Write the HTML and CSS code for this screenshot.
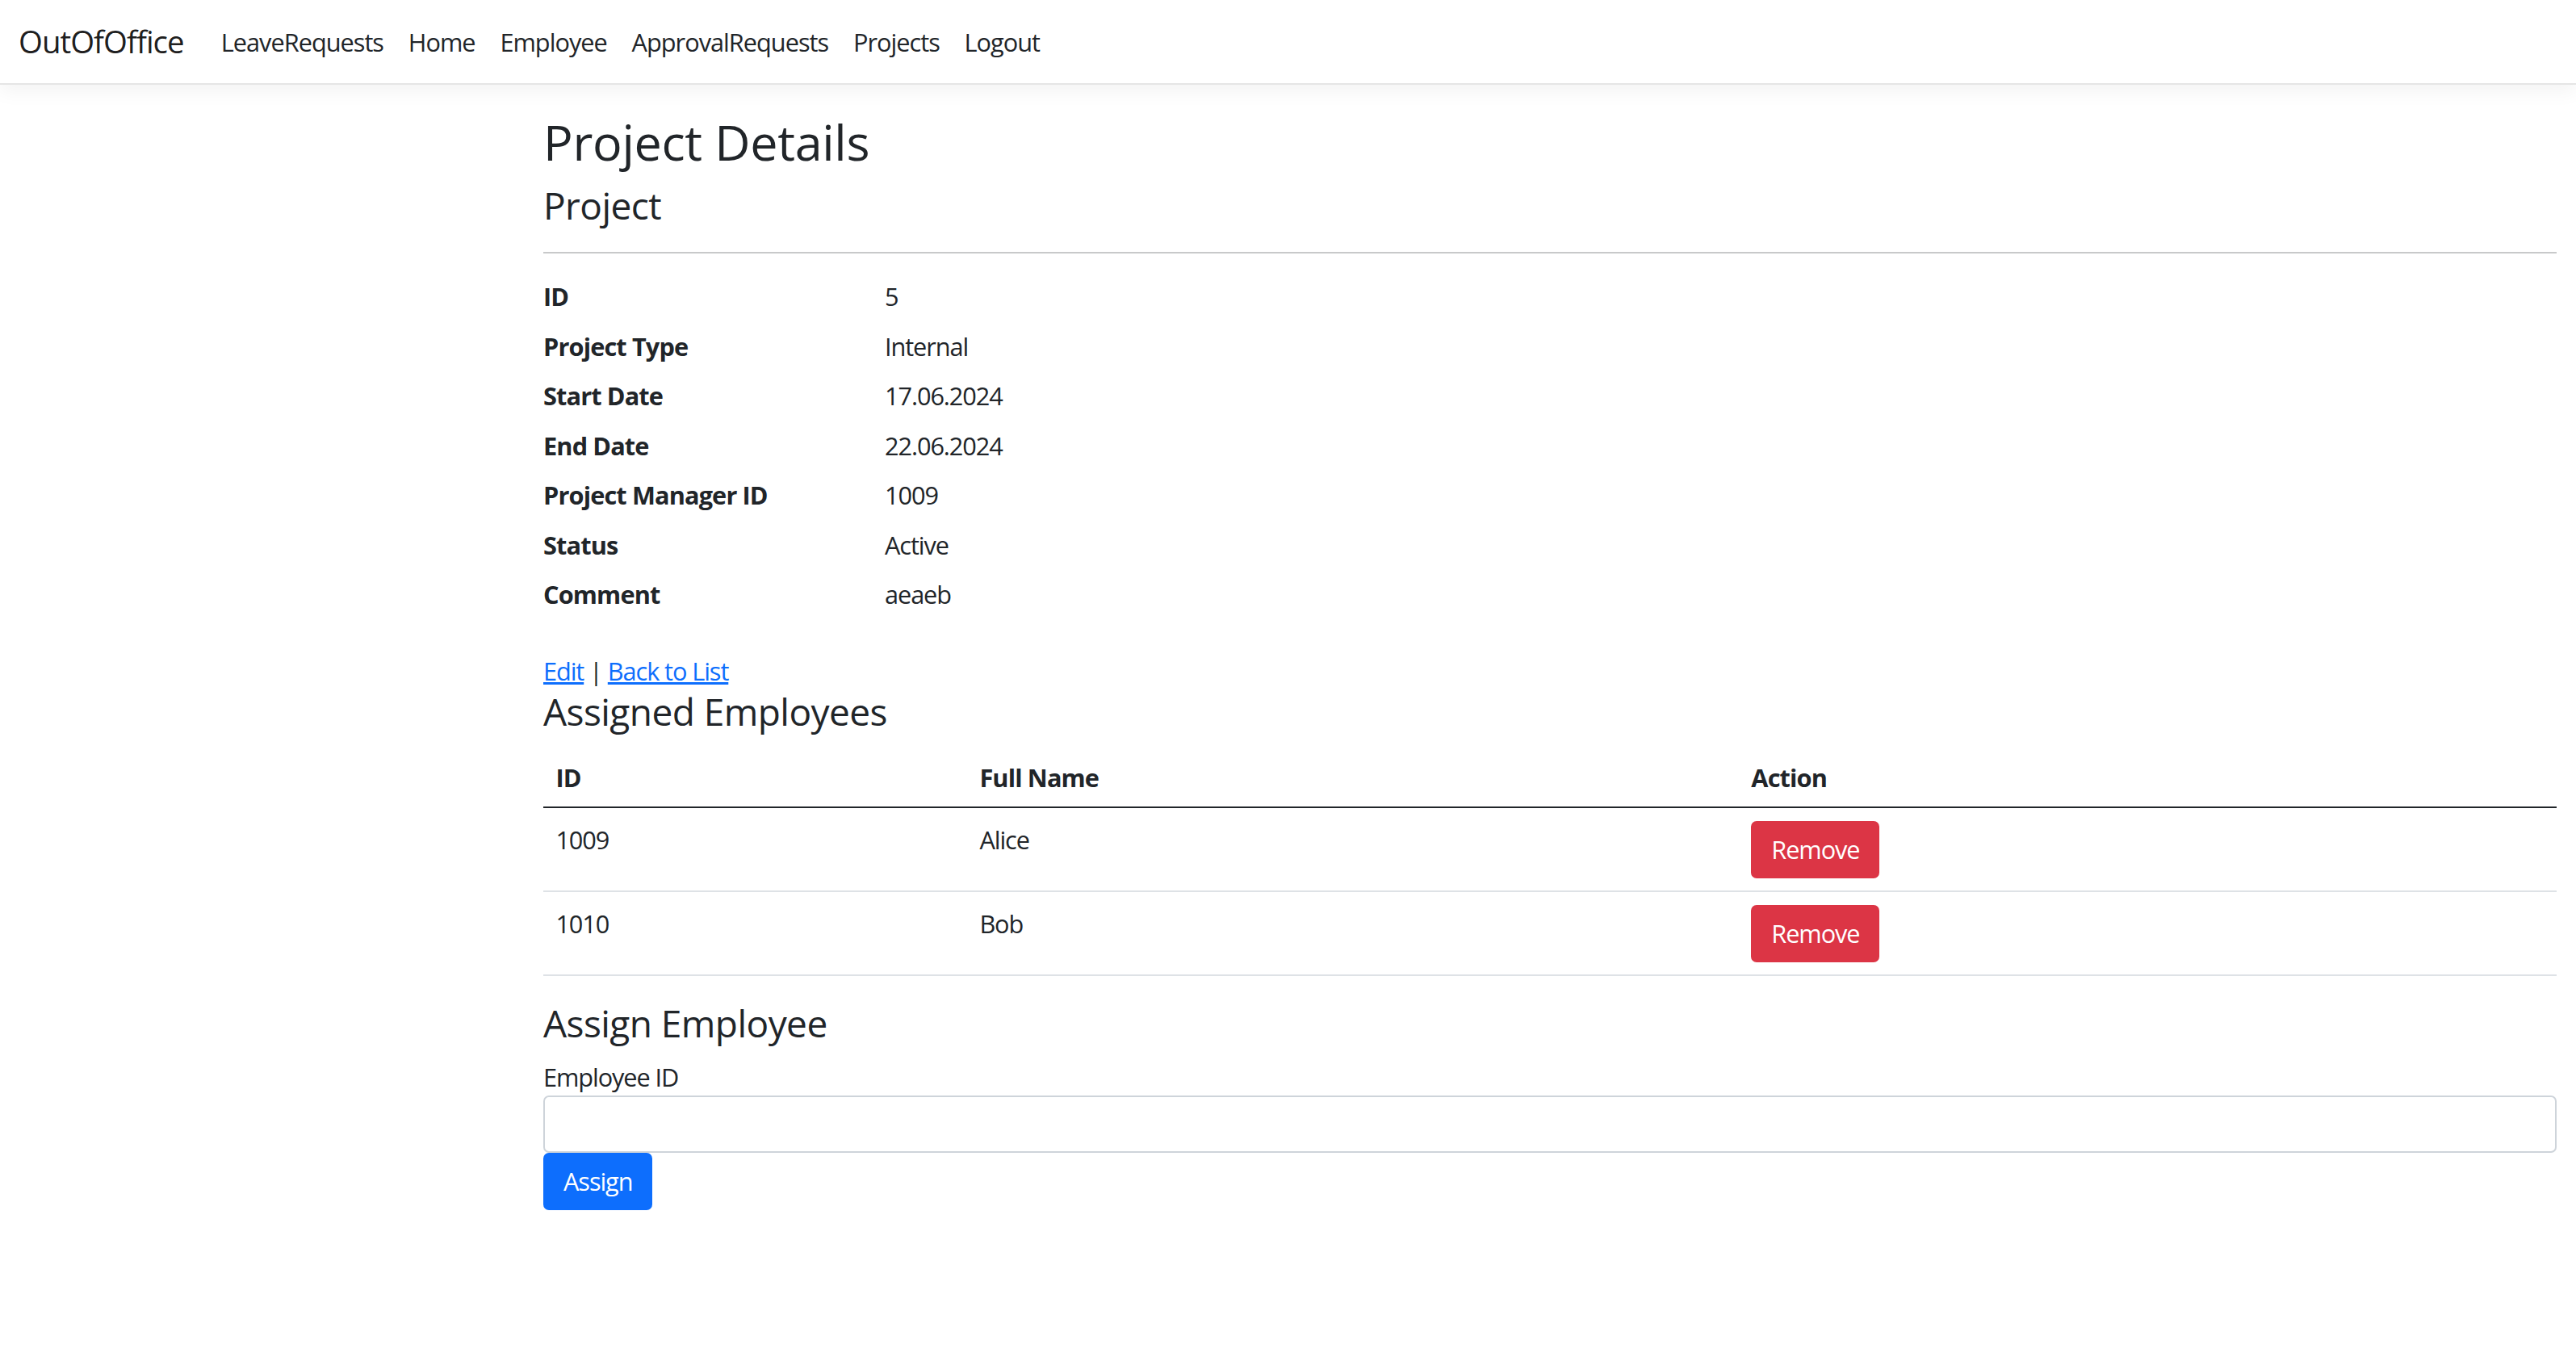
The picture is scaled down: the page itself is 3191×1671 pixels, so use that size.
FILE: index.html
```html
<!DOCTYPE html>
<html lang="en">
<head>
<meta charset="utf-8">
<title>Project Details - OutOfOffice</title>
<link rel="stylesheet" href="styles.css">
</head>
<body>
<header class="navbar">
  <a class="brand" href="#">OutOfOffice</a>
  <nav class="nav">
    <a class="nav-link" href="#">LeaveRequests</a>
    <a class="nav-link" href="#">Home</a>
    <a class="nav-link" href="#">Employee</a>
    <a class="nav-link" href="#">ApprovalRequests</a>
    <a class="nav-link" href="#">Projects</a>
    <a class="nav-link" href="#">Logout</a>
  </nav>
</header>
<main class="main">
  <h1 class="page-title">Project Details</h1>
  <h4 class="section-title">Project</h4>
  <hr class="divider">
  <dl class="details">
    <dt>ID</dt><dd>5</dd>
    <dt>Project Type</dt><dd>Internal</dd>
    <dt>Start Date</dt><dd>17.06.2024</dd>
    <dt>End Date</dt><dd>22.06.2024</dd>
    <dt>Project Manager ID</dt><dd>1009</dd>
    <dt>Status</dt><dd>Active</dd>
    <dt>Comment</dt><dd>aeaeb</dd>
  </dl>
  <div class="actions"><a href="#">Edit</a> | <a href="#">Back to List</a></div>
  <h4 class="section-title">Assigned Employees</h4>
  <table class="table">
    <thead>
      <tr><th class="col-id">ID</th><th class="col-name">Full Name</th><th>Action</th></tr>
    </thead>
    <tbody>
      <tr><td>1009</td><td>Alice</td><td><button class="btn btn-danger" type="button">Remove</button></td></tr>
      <tr><td>1010</td><td>Bob</td><td><button class="btn btn-danger" type="button">Remove</button></td></tr>
    </tbody>
  </table>
  <h4 class="section-title form-title">Assign Employee</h4>
  <form class="assign-form">
    <label class="form-label" for="employeeId">Employee ID</label>
    <input class="form-control" id="employeeId" type="text">
    <button class="btn btn-primary" type="button">Assign</button>
  </form>
</main>
</body>
</html>
```
FILE: styles.css
```css
html, body {
  margin: 0;
  padding: 0;
  background: #ffffff;
}
body {
  font-family: "Open Sans", "Noto Sans", sans-serif;
  font-size: 30.7px;
  line-height: 46px;
  letter-spacing: -0.035em;
  color: #212529;
}
a {
  color: #0d6efd;
}
.navbar {
  display: flex;
  align-items: center;
  height: 103px;
  padding: 0 23px;
  border-bottom: 2px solid #e5e5e5;
  box-shadow: 0 8px 23px rgba(0, 0, 0, 0.05);
  margin-bottom: 34px;
  background: #ffffff;
}
.brand {
  font-size: 38.4px;
  line-height: 57px;
  letter-spacing: -0.025em;
  color: rgba(0, 0, 0, 0.9);
  text-decoration: none;
  margin-right: 30.7px;
}
.nav {
  display: flex;
}
.nav-link {
  padding: 0 15.4px;
  color: #212529;
  text-decoration: none;
  letter-spacing: -0.032em;
}
.main {
  padding: 0 24px 60px 673px;
}
.page-title {
  margin: 0 0 14.6px;
  font-size: 61px;
  line-height: 73.2px;
  font-weight: 500;
  letter-spacing: -0.005em;
}
.section-title {
  margin: 0 0 15.4px;
  font-size: 46px;
  line-height: 55.2px;
  font-weight: 500;
  letter-spacing: -0.012em;
}
.divider {
  margin: 30px 0;
  border: 0;
  border-top: 2px solid #c8c9ca;
}
.details {
  display: grid;
  grid-template-columns: 423px 1fr;
  row-gap: 15.5px;
  margin: 0 0 49px;
}
.details dt {
  font-weight: 700;
  letter-spacing: -0.028em;
}
.details dd {
  margin: 0;
}
.actions a {
  text-decoration: underline;
}
.table {
  width: 100%;
  border-collapse: collapse;
  margin-bottom: 31px;
}
.table th,
.table td {
  padding: 15.4px;
  text-align: left;
  vertical-align: top;
}
.table th {
  padding-bottom: 13.4px;
  font-weight: 700;
  letter-spacing: -0.028em;
  border-bottom: 2px solid #212529;
}
.table td {
  border-bottom: 2px solid #dee2e6;
}
.col-id {
  width: 21.05%;
}
.col-name {
  width: 38.33%;
}
.btn {
  display: inline-block;
  box-sizing: border-box;
  height: 71px;
  padding: 10.5px 23px;
  border: 2px solid transparent;
  border-radius: 7px;
  font-family: inherit;
  font-size: 30.7px;
  line-height: 46px;
  letter-spacing: -0.035em;
  color: #ffffff;
  cursor: pointer;
}
.btn-danger {
  background: #dc3545;
  border-color: #dc3545;
}
.btn-primary {
  background: #0d6efd;
  border-color: #0d6efd;
}
.assign-form {
  display: flex;
  flex-direction: column;
  align-items: flex-start;
}
.form-label {
  display: block;
  margin-bottom: 0;
}
.form-control {
  display: block;
  box-sizing: border-box;
  width: 100%;
  height: 71px;
  padding: 10.5px 23px;
  border: 2px solid #ced4da;
  border-radius: 7px;
  font-family: inherit;
  font-size: 30.7px;
  background: #ffffff;
}
```
